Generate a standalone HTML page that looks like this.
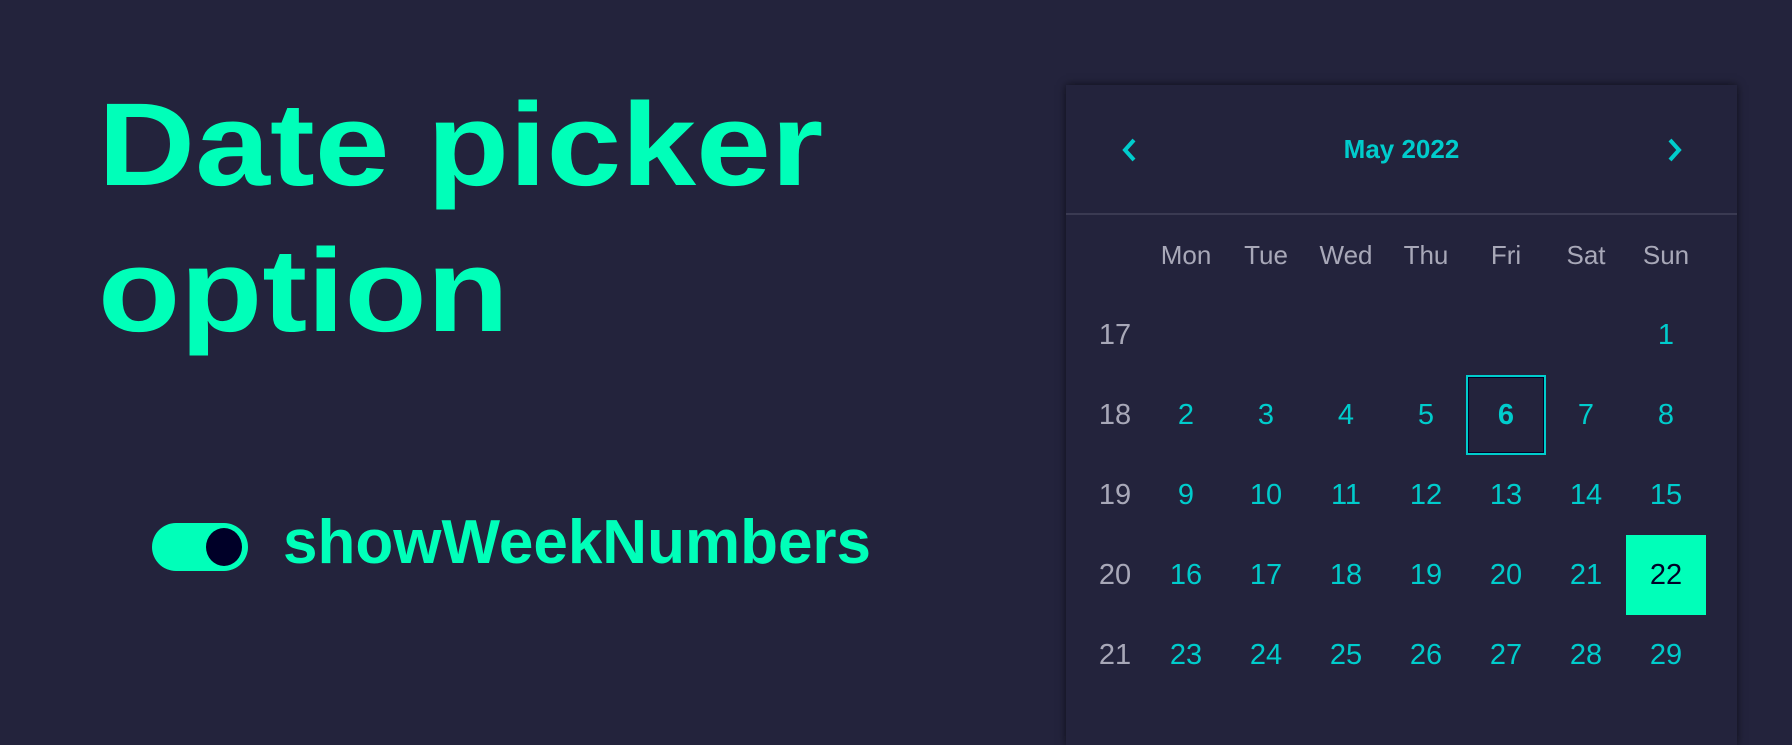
<!DOCTYPE html>
<html><head><meta charset="utf-8"><style>
html,body{margin:0;padding:0}
body{width:1792px;height:720px;background:#23233c;position:relative;overflow:hidden;font-family:"Liberation Sans",sans-serif}
.t{position:absolute;left:98px;color:#00ffb9;font-weight:bold;font-size:118px;line-height:146px;top:72px;margin:0;white-space:nowrap;transform:scaleX(1.14);transform-origin:0 0}
.tog{position:absolute;left:152px;top:523px;width:96px;height:48px;border-radius:24px;background:#00ffb9}
.tog i{position:absolute;left:54px;top:5px;width:36px;height:38px;border-radius:50%;background:#000028}
.lab{position:absolute;left:283px;top:508px;font-size:62px;font-weight:bold;color:#00ffb9;line-height:70px}
.cal{position:absolute;left:1066px;top:85px;width:671px;height:660px;background:#23233c;box-shadow:0 0 8px rgba(0,0,0,.6)}
.hd{position:absolute;left:0;top:0;width:671px;height:128px;border-bottom:2px solid #3a3a52}
.mt{position:absolute;left:0;width:671px;top:48px;text-align:center;color:#00cccc;font-weight:bold;font-size:26px;line-height:32px}
.c{position:absolute;width:80px;height:80px;line-height:80px;text-align:center;font-size:29px;color:#00cccc;box-sizing:border-box}
.w{color:#a8a8b8}
.dh{color:#a8a8b8;font-size:26px}
.sel{background:#00ffb9;color:#000028}
.tod{border:2px solid #00cccc;font-weight:bold;line-height:76px}
.tod::after{content:"";position:absolute;inset:0;border:1px solid #000028}
</style></head><body>
<div class="t">Date picker<br>option</div>
<div class="tog"><i></i></div>
<div class="lab">showWeekNumbers</div>
<div class="cal">
<div class="hd">
<svg style="position:absolute;left:54px;top:52px" width="20" height="26" viewBox="0 0 20 26"><path d="M14 3 L5 13 L14 23" fill="none" stroke="#00cccc" stroke-width="4"/></svg>
<div class="mt">May 2022</div>
<svg style="position:absolute;left:598px;top:52px" width="20" height="26" viewBox="0 0 20 26"><path d="M6 3 L15 13 L6 23" fill="none" stroke="#00cccc" stroke-width="4"/></svg>
</div>
<div id="g"></div>
</div>
<script>
var g=document.getElementById('g'),h='';
var L0=9,T=130;
var days=['Mon','Tue','Wed','Thu','Fri','Sat','Sun'];
for(var i=0;i<7;i++)h+='<div class="c dh" style="left:'+(80*(i+1))+'px;top:'+T+'px">'+days[i]+'</div>';
var wk=[17,18,19,20,21],d=1;
for(var r=0;r<5;r++){
 h+='<div class="c w" style="left:'+L0+'px;top:'+(T+80*(r+1))+'px">'+wk[r]+'</div>';
 for(var c=0;c<7;c++){
  if(r==0&&c<6)continue;
  var cls='c'+(d==22?' sel':'')+(d==6?' tod':'');
  h+='<div class="'+cls+'" style="left:'+(80*(c+1))+'px;top:'+(T+80*(r+1))+'px">'+d+'</div>';d++;
 }
}
g.innerHTML=h;
</script>
</body></html>
